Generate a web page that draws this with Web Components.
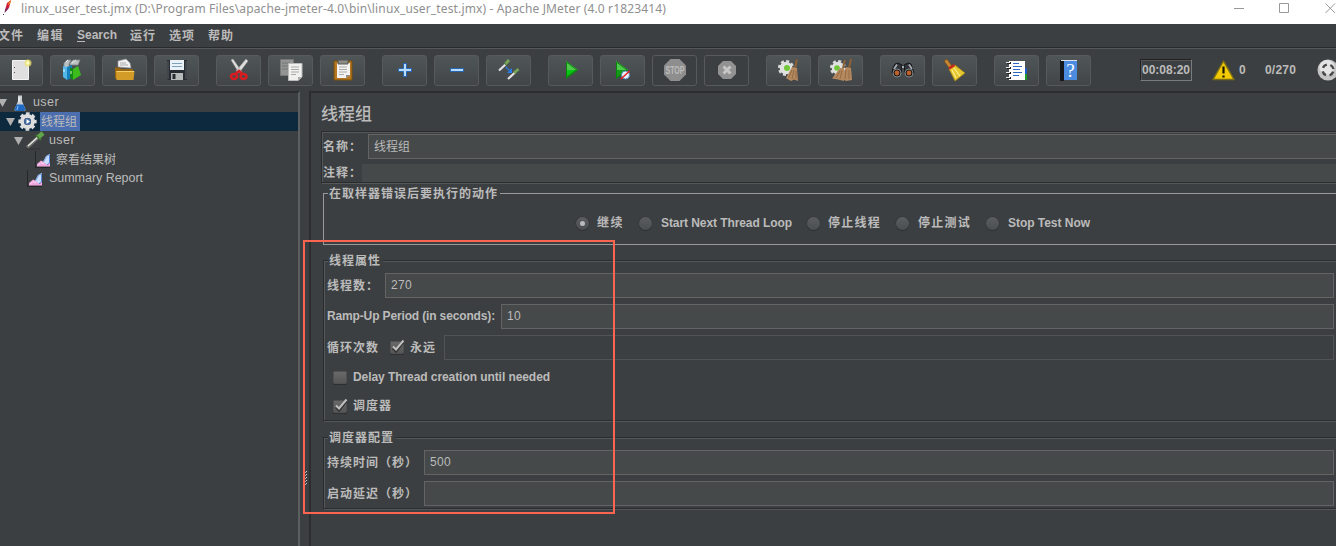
<!DOCTYPE html>
<html lang="zh-CN">
<head>
<meta charset="utf-8">
<title>Apache JMeter</title>
<style>
html,body{margin:0;height:100%;overflow:hidden;background:#3c3f41}
body{font-family:"Liberation Sans","Noto Sans CJK SC",sans-serif;font-size:12px;color:#bbb}
</style>
</head>
<body>
<jm-app></jm-app>
<script>
const define = (name, html, setup) => customElements.define(name, class extends HTMLElement {
  connectedCallback() {
    if (this.shadowRoot) return;
    const t = document.createElement('template');
    t.innerHTML = html;
    this.attachShadow({mode: 'open'}).append(t.content.cloneNode(true));
    if (setup) setup.call(this, this.shadowRoot);
  }
});

/* One-line text tracked to an exact advance width */
define('fit-text', `<style>
:host{display:block;white-space:pre;overflow:visible;line-height:16px;flex:none}
span{display:inline-block;white-space:pre}
</style><span><slot></slot></span>`, function (r) {
  const w = +this.getAttribute('w'), s = r.querySelector('span');
  const n = [...this.textContent].length;
  s.style.letterSpacing = (w - s.getBoundingClientRect().width) / n + 'px';
  this.style.width = w + 'px';
});

define('title-bar', `<style>
:host{display:flex;height:24px;background:#fff;color:#8f8f8f;font-family:"Noto Sans",sans-serif;font-size:12px;overflow:hidden}
.logo{width:21px;height:18px;flex:none}
fit-text{margin-top:1px}
.ctl{margin-left:auto;width:103px;height:18px;flex:none}
</style>
<svg class="logo" viewBox="0 0 21 18"><path d="M11 0 7 3 5 10 6 11 9 8Z" fill="#d2203a"/><path d="M11 0 8.500 2.500 8 5 10.500 3Z" fill="#f08a24"/><path d="M5 10 4.500 13 6 11.500 8 9 7 7Z" fill="#7b2a63"/><path d="M3 14.500H4" stroke="#334"/></svg>
<fit-text w="645">linux_user_test.jmx (D:\\Program Files\\apache-jmeter-4.0\\bin\\linux_user_test.jmx) - Apache JMeter (4.0 r1823414)</fit-text>
<svg class="ctl" viewBox="0 0 103 18" fill="none" stroke="#999"><path d="M1 8.500H11M46.500 3.500H55.500V12.500H46.500ZM92.500 3.500 102 13M102 3.500 92.500 13"/></svg>`);

define('menu-bar', `<style>
:host{display:flex;height:23px;align-items:center;border-bottom:1px solid #282a2b;box-shadow:0 1px #555759;font-weight:bold;overflow:hidden}
fit-text{margin-right:13px}
fit-text:first-of-type{margin-left:-2px}
.s{margin-top:-1px}
u{text-underline-offset:2px}
</style>
<fit-text w="26">文件</fit-text><fit-text w="27">编辑</fit-text><fit-text class="s" w="40"><u>S</u>earch</fit-text><fit-text w="26">运行</fit-text><fit-text w="26">选项</fit-text><fit-text w="26">帮助</fit-text>`);

const ART = {
new: `<path d="M14.500 5.500H30.500V24.500H14.500Z" fill="#dfdfdf" stroke="#f4f4f4"/><path d="M16.500 12v1M16.500 17v1" stroke="#555"/><circle cx="30" cy="8" r="3.500" fill="#eee46a" opacity=".75"/><circle cx="30" cy="8" r="1.800" fill="#fffcc0"/>`,
templates: `<path d="M14 8 17 5H21L19 9V13H14ZM20 8 23 5H30L28 10H20Z" fill="#b9c0c0" stroke="#80888a" stroke-width=".8"/><path d="M16 7l2-2M22 8l4-3" stroke="#eee"/><path d="M13 11 17 12V25L13 22Z" fill="#53b8e8"/><path d="M17 12 22 10V23L17 25Z" fill="#1580bd"/><path d="M14 14v3" stroke="#d8f4ff"/><path d="M20 12 23 14V25L20 23Z" fill="#128817"/><path d="M23 14 28 11 31 20 23 25Z" fill="#3dbd1b"/><path d="M21 16v3" stroke="#caffad"/>`,
open: `<path d="M16 12V6L24 4 28 8 29 13Z" fill="#f1f1f1" stroke="#999" stroke-width=".7"/><path d="M18 8h6M18 10h8" stroke="#aaa"/><path d="M13 12.500H18L19 14H31V24H14L13 23Z" fill="#9a6510"/><path d="M14 16H32.500L31.500 25H14.500Z" fill="#d39c28"/><path d="M14.500 16.500H32" fill="none" stroke="#f4cf6c"/>`,
save: `<path d="M13 5H33V25H14L13 24Z" fill="#2a2c34"/><path d="M14 6V24M32 6V24" stroke="#596064"/><path d="M16 5H30V15H16Z" fill="#eaf2f7"/><path d="M18 8.500H28M18 11.500H28" stroke="#7fa0ba"/><path d="M17 18H29V25H17Z" fill="#b6babb"/><path d="M18.500 19H21.500V24H18.500Z" fill="#292c31"/>`,
cut: `<path d="M15 5 17 4 26 17 23 18ZM30 4 32 6 23 18 20 16Z" fill="#dedede" stroke="#999" stroke-width=".5"/><g fill="none" stroke="#d81c20" stroke-width="2.600"><ellipse cx="18" cy="21.500" rx="3" ry="2.500"/><ellipse cx="27.500" cy="21.500" rx="3" ry="2.500"/><path d="M20 18.500 23 16 26 18.500"/></g>`,
copy: `<path d="M12.500 4.500H25.500V20.500H12.500Z" fill="#929594" stroke="#777"/><path d="M14 8h8M14 11h7M14 14h7" stroke="#727675"/><path d="M20.500 8.500H34V22L30 25.500H20.500Z" fill="#f0f1ee" stroke="#bbb"/><path d="M23 12h8M23 14.500h8M23 17h8M23 19.500h5" stroke="#aaa"/><path d="M30 25V22H34Z" fill="#aaa"/>`,
paste: `<path d="M14 6H32V25H14Z" fill="#b77720" stroke="#79500f"/><path d="M17 8H30V20L26 23H17Z" fill="#f2f2f0"/><path d="M18 5H28V9H18Z" fill="#8b8c86" stroke="#555"/><path d="M19 12h8M19 14.500h8M19 17h8M19 19.500h5" stroke="#aaa"/><path d="M26 23V20H30Z" fill="#888"/>`,
plus: `<path d="M21.500 8.500H24.500V13.500H29.500V16.500H24.500V21.500H21.500V16.500H16.500V13.500H21.500Z" fill="#b6dcfa" stroke="#2765b6"/>`,
minus: `<path d="M16.500 13.500H29.500V16.500H16.500Z" fill="#b6dcfa" stroke="#2765b6"/>`,
toggle: `<path d="M13 15.500 20 9" stroke="#e3e3e3" stroke-width="2.200"/><path d="M19 9.500 23 5" stroke="#73a457" stroke-width="3"/><path d="M18 7.500 21 11" stroke="#426b35"/><path d="M22 24 29 17.500" stroke="#e3e3e3" stroke-width="2.200"/><path d="M28 18 32.500 14" stroke="#73a457" stroke-width="3"/><path d="M20 12 24 16" stroke="#287eec" stroke-width="1.500" stroke-dasharray="2 .6"/><path d="M26 13V18H21Z" fill="#287eec"/>`,
play: `<path d="M18 6 30 15 18 24Z" fill="#119b16"/><path d="M18 6 30 15H18Z" fill="#4fc84c"/><path d="M18.500 7V23L29 15Z" fill="none" stroke="#078409"/><path d="M19 15H27L19 21Z" fill="#05c815"/>`,
playno: `<path d="M16 6 28 15 16 24Z" fill="#119b16"/><path d="M16 6 28 15H16Z" fill="#4fc84c"/><path d="M16.500 7V23L27 15Z" fill="none" stroke="#078409"/><circle cx="25.500" cy="20" r="4" fill="#e9f3ff" stroke="#5689b8"/><path d="M21 24 29.500 16" stroke="#e32322" stroke-width="1.600"/>`,
stop: `<path d="M18.500 4H27.500L34 10.500V19.500L27.500 26H18.500L12 19.500V10.500Z" fill="#8e8e8e"/><text x="23" y="18.500" text-anchor="middle" font-family="Liberation Sans,sans-serif" font-weight="bold" font-size="10" textLength="19" lengthAdjust="spacingAndGlyphs" fill="#bcbcbc">STOP</text>`,
shut: `<path d="M19 6H27L32 11V19L27 24H19L14 19V11Z" fill="#929292"/><path d="M19.500 11.500 26.500 18.500M26.500 11.500 19.500 18.500" stroke="#c6c6c6" stroke-width="3"/>`,
gearBroom: `<circle cx="20" cy="13" r="6.800" fill="none" stroke="#dadada" stroke-width="2.600" stroke-dasharray="3 2.340"/><circle cx="20" cy="13" r="6.300" fill="#e0e2df"/><circle cx="21" cy="13" r="3" fill="#70c738"/><path d="M31 4.500 29 13" stroke="#8d6034" stroke-width="2"/><path d="M26 12 31 13 32 26 28 24.500 25 26 20 23Z" fill="#b5895f"/><path d="M26 15 22.500 23M28 15 26 24M30 16 30 24" stroke="#8a6440" stroke-width=".8"/>`,
gearBrooms: `<circle cx="20" cy="13" r="6.800" fill="none" stroke="#dadada" stroke-width="2.600" stroke-dasharray="3 2.340"/><circle cx="20" cy="13" r="6.300" fill="#e0e2df"/><circle cx="19" cy="13" r="2.800" fill="#70c738"/><path d="M27 5 25 13M33 4 31 13" stroke="#8d6034" stroke-width="2"/><path d="M22 13 26 13 26 26 20 24.500 14 23.500ZM28 12 33 13 34 25 28 26 23 23Z" fill="#b5895f"/><path d="M22 16 18 23M24 15 22 24M28 15 27 24M31 15 31 24" stroke="#8a6440" stroke-width=".8"/>`,
binoc: `<path d="M15 9 18 8 22 10 21 18H12L13 13ZM24 10 28 8 31 9 34 18H25Z" fill="#30343a" stroke="#131517"/><path d="M14 14 17 9.500M29 9.500 32 14M22 12h2" stroke="#a8acb0" stroke-width="1.800"/><circle cx="17" cy="18" r="4" fill="#171717" stroke="#84878a"/><circle cx="29" cy="18" r="4" fill="#171717" stroke="#84878a"/><circle cx="17" cy="18" r="2.400" fill="#bd622d"/><circle cx="29" cy="18" r="2.400" fill="#bd622d"/>`,
clear: `<path d="M12 6 15 4 20 11 17 13Z" fill="#c48632" stroke="#6b4517" stroke-width=".7"/><path d="M17 14 23 10 33 18 23 26Z" fill="#e6c631" stroke="#a68512" stroke-width=".8"/><path d="M20 15 24 23M22 13 28 21" stroke="#fff08c" stroke-width="1.200"/><path d="M17 13.500 22.500 10" stroke="#c7281e" stroke-width="2.600"/>`,
list: `<path d="M30 13H33V19H30Z" fill="#235bc6"/><path d="M30 19H33V25H30Z" fill="#199c26"/><path d="M15 6H31V25H15Z" fill="#fff"/><path d="M19 8.500h6M19 11.500h9M19 14.500h7M19 17.500h9M19 20.500h6" stroke="#2b68c2"/><path d="M13 8h4M13 13h4M13 18h4M13 23h4" stroke="#202020" stroke-width="2"/><path d="M12 7.500h4M12 12.500h4M12 17.500h4M12 22.500h4" stroke="#e9e9e9"/>`,
help: `<path d="M14 5H18V26H14Z" fill="#15171a"/><path d="M18 5H31V25H18Z" fill="#4b8ce0"/><path d="M15 5.500H31" stroke="#dbe2e8"/><text x="24.500" y="22" text-anchor="middle" font-family="Liberation Serif,serif" font-weight="normal" font-size="19" fill="#fff">?</text>`
};

define('tool-button', `<style>
:host{display:block;box-sizing:border-box;width:45px;height:31px;flex:none;border:1px solid #57595a;border-radius:3px;background:linear-gradient(#505658,#414547)}
:host([off]){background:#3c3f41}
:host([gap]){margin-left:10px}
svg{display:block;width:45px;height:31px;margin:-1px}
</style><svg viewBox="0 0 45 31" fill="none"></svg>`, function (r) {
  r.querySelector('svg').innerHTML = ART[this.getAttribute('icon')];
});

define('tool-bar', `<style>
:host{display:flex;height:43px;padding-top:1px;box-sizing:border-box;align-items:center;gap:7px;margin-left:-2px;font-weight:bold;width:1340px;overflow:hidden}
.time{margin-left:42px;width:50px;height:20px;border:1px solid;border-color:#222 #777d7e #777d7e #222;box-shadow:inset 1px 1px #555;display:flex;align-items:center;justify-content:center;flex:none}
.warn{width:24px;height:22px;margin-left:12px;flex:none}
fit-text{margin-left:-3px}
fit-text.n{margin-left:12px}
.ball{width:22px;height:22px;margin-left:14px;flex:none}
</style>
<tool-button icon="new"></tool-button><tool-button icon="templates"></tool-button><tool-button icon="open"></tool-button><tool-button icon="save"></tool-button>
<tool-button gap icon="cut"></tool-button><tool-button icon="copy"></tool-button><tool-button icon="paste"></tool-button>
<tool-button gap icon="plus"></tool-button><tool-button icon="minus"></tool-button><tool-button icon="toggle"></tool-button>
<tool-button gap icon="play"></tool-button><tool-button icon="playno"></tool-button><tool-button off icon="stop"></tool-button><tool-button off icon="shut"></tool-button>
<tool-button gap icon="gearBroom"></tool-button><tool-button icon="gearBrooms"></tool-button>
<tool-button gap icon="binoc"></tool-button><tool-button icon="clear"></tool-button>
<tool-button gap icon="list"></tool-button><tool-button icon="help"></tool-button>
<div class="time"><fit-text w="48" style="margin:0">00:08:20</fit-text></div>
<svg class="warn" viewBox="0 0 24 22"><path d="M12.500 2 23 20.500H2Z" fill="#f2cb05" stroke="#7b6c16" stroke-width="1.500" stroke-linejoin="round"/><path d="M12.500 7.500V14.500M12.500 16.500V18.500" stroke="#191700" stroke-width="2.200"/></svg>
<fit-text w="7">0</fit-text><fit-text class="n" w="31">0/270</fit-text>
<svg class="ball" viewBox="0 0 22 22"><circle cx="11" cy="11" r="10.500" fill="#c4c4c4"/><circle cx="10" cy="8.500" r="7.500" fill="#e4e4e4"/><circle cx="11" cy="11" r="5.500" fill="none" stroke="#484848" stroke-width="2.400" stroke-dasharray="5 3.640" stroke-dashoffset="-1.800"/></svg>`);

const NODE = {
flask: `<path d="M8 2.500H12V8L15.500 16.500Q15.500 18 14 18H6Q4.500 18 4.500 16.500L8 8Z" fill="#c9ced3"/><path d="M6.500 11.500H13.500L15.500 17 14 18H6L4.500 17Z" fill="#1e69c4"/><path d="M8 13 7 17" stroke="#8bc2f4"/><path d="M9 4V9" stroke="#fff"/>`,
gear: `<circle cx="9.500" cy="9.500" r="7.700" fill="none" stroke="#dcdcdc" stroke-width="3" stroke-dasharray="3.600 2.448" stroke-dashoffset="1.800"/><circle cx="9.500" cy="9.500" r="5.400" fill="none" stroke="#dedede" stroke-width="4"/><circle cx="9.500" cy="9.500" r="3.600" fill="#46689b"/><path d="M8.500 7 12 9.500 8.500 12Z" fill="#fff"/>`,
dropper: `<path d="M0 18H14" stroke="#303233"/><path d="M1 16.500 12 6.500" stroke="#6a6c6a" stroke-width="3.600"/><path d="M2 15 12 6" stroke="#e7e7e2" stroke-width="1.500"/><path d="M10 4 15 9" stroke="#3d742e" stroke-width="2"/><path d="M12.500 6 17 2" stroke="#61a54c" stroke-width="4.500"/>`,
chart: `<path d="M1.500 1V18M1 17.500H16" stroke="#252729"/><path d="M3 16.500V14L7 10.500 10 12 16 11V16.500Z" fill="#f1a5dc"/><path d="M9 12 12 6 16 4V12L13 14.500Z" fill="#c9ddff"/><path d="M9.500 12 12.500 6.500 15.500 4.500" fill="none" stroke="#7aa6e6"/><path d="M15.500 5V13L13 15" stroke="#4f83d4" fill="none"/><path d="M4 15.500 7 12.500 10 14" fill="none" stroke="#fbd9f2"/>`
};
define('tree-node', `<style>
:host{display:flex;height:19px;align-items:center;overflow:hidden;width:298px}
:host([selected]){background:#0d293e}
.a{width:9px;height:19px;flex:none;margin-right:3px}.i{width:20px;height:19px;flex:none;margin-right:2px}
.l{height:19px;display:flex;align-items:center;padding-left:1px}
:host([selected]) .l{background:#4b6eaf;padding-right:3px}
:host([leaf]) .a{visibility:hidden}
</style><svg class="a" viewBox="0 0 9 19"><path d="M0 6H9L4.500 14Z" fill="#afafaf"/></svg><svg class="i" viewBox="0 0 20 19" fill="none"></svg><div class="l"><slot></slot></div>`, function (r) {
  r.querySelector('.a').style.marginLeft = this.getAttribute('depth') * 8 - 2 + 'px';
  r.querySelector('.i').innerHTML = NODE[this.getAttribute('icon')];
});
define('test-tree', `<style>
:host{display:block;width:298px;flex:none;border-top:2px solid #2b2d2e;border-right:2px solid #5c5f60;overflow:hidden}
.la{font-size:12.500px;margin-top:-2px}
</style>
<tree-node depth="0" icon="flask"><fit-text class="la" w="26">user</fit-text></tree-node>
<tree-node depth="1" icon="gear" selected><fit-text w="36">线程组</fit-text></tree-node>
<tree-node depth="2" icon="dropper"><fit-text class="la" w="26">user</fit-text></tree-node>
<tree-node depth="3" icon="chart" leaf><fit-text w="60" style="margin-left:-1px">察看结果树</fit-text></tree-node>
<tree-node depth="2" icon="chart" leaf><fit-text class="la" w="94">Summary Report</fit-text></tree-node>`);

define('text-field', `<style>
:host{display:flex;align-items:center;box-sizing:border-box;height:25px;flex:1;border:1px solid #646464;background:#45494a;padding-left:5px}
:host([off]){background:#3c3f41;border-color:#515354}
:host([bare]){border:0;height:18px}
:host([num]){padding-bottom:1px}
</style><slot></slot>`);

define('radio-item', `<style>
:host{display:flex;align-items:center;gap:8px;font-weight:bold}
i{width:13px;height:13px;flex:none;border-radius:50%;background:linear-gradient(#5a5e60,#4a4e50);box-shadow:0 1px #2e3031,0 0 0 .5px #333;display:flex;align-items:center;justify-content:center}
:host([on]) i::after{content:"";width:5px;height:5px;border-radius:50%;background:#bbb}
</style><i></i><slot></slot>`);

define('check-item', `<style>
:host{display:flex;align-items:center;font-weight:bold}
svg{width:16px;height:17px;margin-right:5px;flex:none}
path{display:none}:host([on]) path{display:block}
</style><svg viewBox="0 0 16 17" fill="none"><defs><linearGradient id="g" x2="0" y2="1"><stop stop-color="#6a6a6a"/><stop offset="1" stop-color="#555"/></linearGradient></defs><rect x="1" y="3" width="14" height="13" rx="1" fill="#2d2f30"/><rect x="1.500" y="2.500" width="13" height="12" rx="1" fill="url(#g)" stroke="#505152"/><path d="M4 9 7 12 14 3" stroke="#333" stroke-width="3"/><path d="M4 7.500 7 10.500 14.500 1.500" stroke="#c0c0c0" stroke-width="2"/></svg><slot></slot>`);

define('group-box', `<style>
:host{display:block;position:relative;box-sizing:border-box;border:1px solid #2a2c2d;box-shadow:1px 1px #555859,inset 1px 1px #555859}
:host([plain]){border-color:#999;box-shadow:none}
.t{position:absolute;left:4px;top:-8px;background:#3c3f41;padding:0 2px 0 1px;font-weight:bold}
:host([bare]) .t{display:none}
</style><div class="t"><slot name="title"></slot></div><slot></slot>`);

define('thread-panel', `<style>
:host{display:block;flex:1;border-top:2px solid #2b2d2e;border-left:2px solid #2b2d2e;padding-left:10px;overflow:hidden;font-weight:bold}
h1{margin:0;height:38px;box-sizing:border-box;padding:14px 0 0 -1px;font-size:17px;font-weight:500}
.row{display:flex;height:25px;align-items:center;margin-bottom:6px}
text-field{font-weight:normal}
group-box{width:1030px;margin-left:2px}
.head{height:52px;margin:0;padding:2px 0 0 1px}
.radios{display:flex;gap:15px;padding:21px 0 0 252px}
</style>
<h1 style="padding-top:14px"><fit-text w="51">线程组</fit-text></h1>
<group-box bare class="head">
 <div class="row" style="margin-bottom:5px"><fit-text w="39">名称：</fit-text><text-field style="margin-left:6px"><fit-text w="36">线程组</fit-text></text-field></div>
 <div class="row" style="height:18px"><fit-text w="39">注释：</fit-text><text-field bare></text-field></div>
</group-box>
<group-box plain style="height:52px;margin-top:10px"><fit-text slot="title" w="169">在取样器错误后要执行的动作</fit-text>
 <div class="radios"><radio-item on><fit-text w="27">继续</fit-text></radio-item><radio-item><fit-text w="131" style="margin-left:1px">Start Next Thread Loop</fit-text></radio-item><radio-item><fit-text w="53">停止线程</fit-text></radio-item><radio-item><fit-text w="53" style="margin-left:1px">停止测试</fit-text></radio-item><radio-item><fit-text w="82" style="margin-left:1px">Stop Test Now</fit-text></radio-item></div>
</group-box>
<group-box style="height:161px;margin-top:15px;padding:12px 18px 0 3px"><fit-text slot="title" w="52">线程属性</fit-text>
 <div class="row"><fit-text w="52">线程数：</fit-text><text-field num style="margin-left:6px"><fit-text w="21">270</fit-text></text-field></div>
 <div class="row"><fit-text w="168" style="margin-top:-2px">Ramp-Up Period (in seconds):</fit-text><text-field num style="margin-left:6px"><fit-text w="14">10</fit-text></text-field></div>
 <div class="row" style="margin-bottom:4px"><fit-text w="52">循环次数</fit-text><check-item on style="margin-left:10px"><fit-text w="26">永远</fit-text></check-item><text-field off style="margin-left:8px"></text-field></div>
 <check-item style="height:26px;margin:0 0 3px 5px"><fit-text w="197">Delay Thread creation until needed</fit-text></check-item>
 <check-item on style="height:26px;margin-left:5px"><fit-text w="39">调度器</fit-text></check-item>
</group-box>
<group-box style="height:72px;margin-top:16px;padding:12px 18px 0 3px"><fit-text slot="title" w="65">调度器配置</fit-text>
 <div class="row"><fit-text w="91">持续时间（秒）</fit-text><text-field num style="margin-left:6px"><fit-text w="21">500</fit-text></text-field></div>
 <div class="row"><fit-text w="91">启动延迟（秒）</fit-text><text-field style="margin-left:6px"></text-field></div>
</group-box>`);

define('split-bar', `<style>
:host{display:flex;width:9px;flex:none;box-sizing:border-box;padding:380px 2px 0 4px}
svg{width:3px;height:15px}
</style><svg viewBox="0 0 3 15"><path d="M2.500 0V15" stroke="#ccc" stroke-dasharray="1 2"/><path d="M1.500 1V15" stroke="#aaa" stroke-dasharray="1 2"/></svg>`);

define('jm-app', `<style>
:host{display:flex;flex-direction:column;position:relative;width:1336px;height:546px;overflow:hidden;background:#3c3f41}
main{display:flex;flex:1;min-height:0}
.mark{position:absolute;left:303px;top:240px;width:308px;height:270px;border:2px solid #fa6450}
</style>
<title-bar></title-bar><menu-bar></menu-bar><tool-bar></tool-bar>
<main><test-tree></test-tree><split-bar></split-bar><thread-panel></thread-panel></main>
<div class="mark"></div>`);
</script>
</body>
</html>
